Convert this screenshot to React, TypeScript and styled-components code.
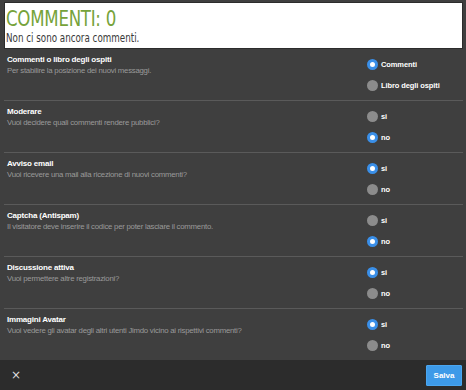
import React from "react";
import styled, { createGlobalStyle } from "styled-components";

const Global = createGlobalStyle`
  html, body { margin: 0; padding: 0; background: #3f3f3f; }
  body { font-family: "Liberation Sans", Arial, sans-serif; width: 466px; height: 390px; overflow: hidden; }
`;

const Page = styled.div`
  display: flex;
  flex-direction: column;
  height: 390px;
`;

const Main = styled.div`
  flex: 1;
  padding: 2px 3px 0 4px;
  display: flex;
  flex-direction: column;
`;

const Header = styled.div`
  background: #ffffff;
  border: 1px solid #2c2c2c;
  height: 45px;
  padding: 0 0 0 1px;
  display: flex;
  flex-direction: column;
  overflow: hidden;
`;

const Title = styled.h1`
  margin: 4px 0 0;
  font-family: "DejaVu Sans Condensed", "DejaVu Sans", sans-serif;
  font-weight: normal;
  font-size: 22px;
  line-height: 23px;
  color: #76a33a;
  letter-spacing: -0.3px;
  transform: scaleX(0.84);
  transform-origin: left center;
  white-space: nowrap;
`;

const Subtitle = styled.div`
  font-family: "DejaVu Sans Condensed", "DejaVu Sans", sans-serif;
  font-size: 12px;
  color: #3a3a3a;
  line-height: 14px;
  margin-top: 1px;
  transform: scaleX(0.81);
  transform-origin: left center;
  white-space: nowrap;
`;

const Row = styled.div<{ $last?: boolean }>`
  height: ${(p) => (p.$last ? 51 : 52)}px;
  border-bottom: ${(p) => (p.$last ? "none" : "1px solid #5a5a5a")};
  display: flex;
  justify-content: space-between;
  padding: 0 0 0 3px;
  box-sizing: border-box;
`;

const Text = styled.div`
  padding-top: 6px;
`;

const RowTitle = styled.div`
  color: #ffffff;
  font-weight: bold;
  font-size: 8px;
  letter-spacing: -0.2px;
  line-height: 10px;
`;

const RowDesc = styled.div`
  color: #9a9a9a;
  font-size: 7.8px;
  letter-spacing: -0.25px;
  line-height: 11px;
`;

const Options = styled.div`
  width: 96px;
  display: flex;
  flex-direction: column;
  gap: 10px;
  padding-top: 10px;
`;

const Option = styled.label`
  display: flex;
  align-items: center;
  gap: 3px;
  height: 11px;
  color: #fff;
  font-size: 7.5px;
  letter-spacing: -0.1px;
  font-weight: bold;
`;

const Radio = styled.span<{ $on?: boolean }>`
  width: 11px;
  height: 11px;
  border-radius: 50%;
  box-sizing: border-box;
  background: ${(p) => (p.$on ? "#ffffff" : "#8c8c8c")};
  border: ${(p) => (p.$on ? "3px solid #3a8fe8" : "none")};
  flex: none;
`;

const Footer = styled.div`
  height: 30px;
  background: #2c2c2c;
  display: flex;
  align-items: center;
  justify-content: space-between;
  padding: 0 4px 0 11px;
`;

const Close = styled.button`
  background: none;
  border: none;
  color: #ddd;
  font-family: "DejaVu Sans", sans-serif;
  font-size: 12px;
  padding: 0;
  cursor: pointer;
`;

const Save = styled.button`
  background: #3d9ae8;
  border: 1px solid #4aa6f0;
  color: #fff;
  font-family: "Liberation Sans", Arial, sans-serif;
  font-weight: bold;
  font-size: 8px;
  width: 36px;
  height: 21px;
  border-radius: 1px;
  padding: 0;
`;

type Setting = { title: string; desc: string; options: string[]; selected: number };

const settings: Setting[] = [
  { title: "Commenti o libro degli ospiti", desc: "Per stabilire la posizione dei nuovi messaggi.", options: ["Commenti", "Libro degli ospiti"], selected: 0 },
  { title: "Moderare", desc: "Vuoi decidere quali commenti rendere pubblici?", options: ["si", "no"], selected: 1 },
  { title: "Avviso email", desc: "Vuoi ricevere una mail alla ricezione di nuovi commenti?", options: ["si", "no"], selected: 0 },
  { title: "Captcha (Antispam)", desc: "Il visitatore deve inserire il codice per poter lasciare il commento.", options: ["si", "no"], selected: 1 },
  { title: "Discussione attiva", desc: "Vuoi permettere altre registrazioni?", options: ["si", "no"], selected: 0 },
  { title: "Immagini Avatar", desc: "Vuoi vedere gli avatar degli altri utenti Jimdo vicino ai rispettivi commenti?", options: ["si", "no"], selected: 0 },
];

export default function App() {
  return (
    <Page>
      <Global />
      <Main>
        <Header>
          <Title>COMMENTI: 0</Title>
          <Subtitle>Non ci sono ancora commenti.</Subtitle>
        </Header>
        {settings.map((s, i) => (
          <Row key={s.title} $last={i === settings.length - 1}>
            <Text>
              <RowTitle>{s.title}</RowTitle>
              <RowDesc>{s.desc}</RowDesc>
            </Text>
            <Options>
              {s.options.map((o, j) => (
                <Option key={o}>
                  <Radio $on={j === s.selected} />
                  {o}
                </Option>
              ))}
            </Options>
          </Row>
        ))}
      </Main>
      <Footer>
        <Close>×</Close>
        <Save>Salva</Save>
      </Footer>
    </Page>
  );
}
